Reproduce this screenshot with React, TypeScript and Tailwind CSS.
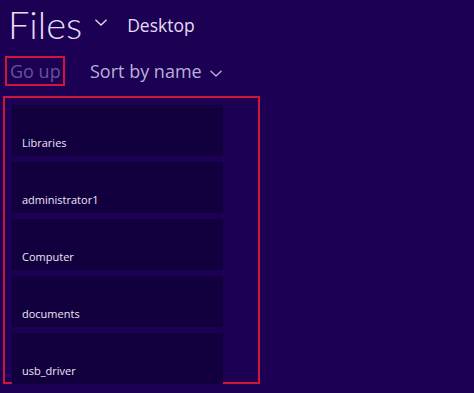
const items = ["Libraries", "administrator1", "Computer", "documents", "usb_driver"];

function Chevron({ className }: { className?: string }) {
  return (
    <svg viewBox="0 0 13 7" className={className} fill="none" stroke="currentColor" strokeWidth={1.4}>
      <polyline points="0.5,0.5 6.5,6.2 12.5,0.5" />
    </svg>
  );
}

export default function App() {
  return (
    <div className="h-[393px] w-[474px] overflow-hidden bg-[#1c0054] font-['Open_Sans','Noto_Sans',sans-serif] text-[#e4ddf5]">
      <div className="flex h-[48px] items-start whitespace-nowrap pl-[8px]">
        <h1 className="mt-[1px] font-['Lato','Open_Sans',sans-serif] text-[38px] font-light leading-[46px]">Files</h1>
        <Chevron className="ml-[13px] mt-[19px] h-[7px] w-[12px] text-[#e4ddf5]" />
        <span className="ml-[20px] mt-[17px] text-[17.5px] leading-none">Desktop</span>
      </div>
      <div className="mt-[8px] flex h-[30px] items-center whitespace-nowrap pl-[5px]">
        <div className="flex h-[30px] w-[60px] items-center border-2 border-[#d0153a] pl-[3px] text-[18px] leading-none text-[#64559a]">
          Go up
        </div>
        <span className="ml-[25px] text-[18px] leading-none text-[#b9b0d9]">Sort by name</span>
        <Chevron className="ml-[8px] mt-[4px] h-[7px] w-[12px] text-[#b9b0d9]" />
      </div>
      <div className="ml-[3px] mt-[10px] flex h-[288px] w-[257px] flex-col gap-[6px] border-2 border-[#d0153a] pl-[7px] pt-[7px]">
        {items.map((name) => (
          <div
            key={name}
            className="flex h-[51px] w-[211px] shrink-0 items-end bg-[#12003e] pb-[6px] pl-[10px] text-[11px] leading-[14px] text-[#ece6f8]"
          >
            {name}
          </div>
        ))}
      </div>
    </div>
  );
}
